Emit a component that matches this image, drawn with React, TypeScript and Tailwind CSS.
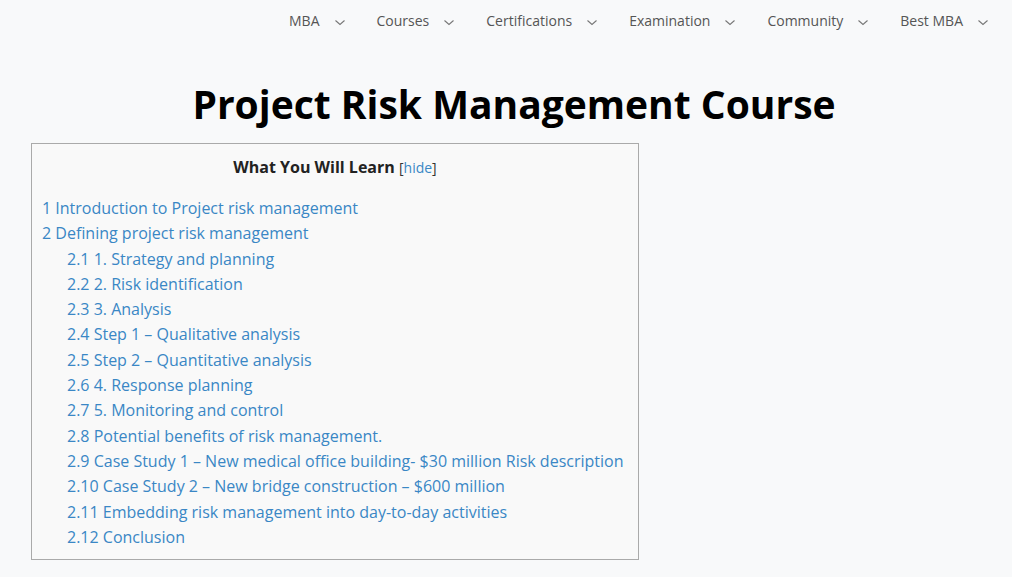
const navItems = ['MBA', 'Courses', 'Certifications', 'Examination', 'Community', 'Best MBA'];

const tocItems: { num: string; label: string; sub?: boolean }[] = [
  { num: '1', label: 'Introduction to Project risk management' },
  { num: '2', label: 'Defining project risk management' },
  { num: '2.1', label: '1. Strategy and planning', sub: true },
  { num: '2.2', label: '2. Risk identification', sub: true },
  { num: '2.3', label: '3. Analysis', sub: true },
  { num: '2.4', label: 'Step 1 – Qualitative analysis', sub: true },
  { num: '2.5', label: 'Step 2 – Quantitative analysis', sub: true },
  { num: '2.6', label: '4. Response planning', sub: true },
  { num: '2.7', label: '5. Monitoring and control', sub: true },
  { num: '2.8', label: 'Potential benefits of risk management.', sub: true },
  { num: '2.9', label: 'Case Study 1 – New medical office building- $30 million Risk description', sub: true },
  { num: '2.10', label: 'Case Study 2 – New bridge construction – $600 million', sub: true },
  { num: '2.11', label: 'Embedding risk management into day-to-day activities', sub: true },
  { num: '2.12', label: 'Conclusion', sub: true },
];

const Chevron = () => (
  <svg width="12" height="7" viewBox="0 0 12 7" fill="none" className="mt-[4px]">
    <path d="M1.5 1.5l4.5 4 4.5-4" stroke="#777" strokeWidth="1.1" />
  </svg>
);

const App: React.FC = () => {
  return (
    <div className="min-h-[577px] bg-[#f8f9fa] font-['Open_Sans',sans-serif] text-[#222]">
      {/* top nav */}
      <div className="flex justify-end pr-[23px] pt-[9px] h-[40px]">
        <div className="flex gap-[31px] text-[14px] text-[#555]">
          {navItems.map((item) => (
            <div key={item} className="flex items-center gap-[14px] h-[22px]">
              <span>{item}</span>
              <Chevron />
            </div>
          ))}
        </div>
      </div>

      <h1 className="text-center pl-[16px] text-[39px] font-bold text-black mt-[38px] leading-[52px]">
        Project Risk Management Course
      </h1>

      <div className="ml-[31px] mt-[13px] w-[608px] border border-[#aaa] bg-[#f9f9f9] pt-[11px] pb-[9px] px-[10px]">
        <div className="text-center text-[16px]">
          <span className="font-bold text-[#222]">What You Will Learn</span>{' '}
          <span className="text-[14px] text-[#333]">
            [<a className="text-[#3a87c5]">hide</a>]
          </span>
        </div>
        <ul className="mt-[17px] text-[16px] leading-[25.3px] text-[#3a87c5]">
          {tocItems.map((t) => (
            <li key={t.num} className={t.sub ? 'pl-[25px] whitespace-nowrap' : 'whitespace-nowrap'}>
              {t.num} {t.label}
            </li>
          ))}
        </ul>
      </div>
    </div>
  );
};

export default App;
